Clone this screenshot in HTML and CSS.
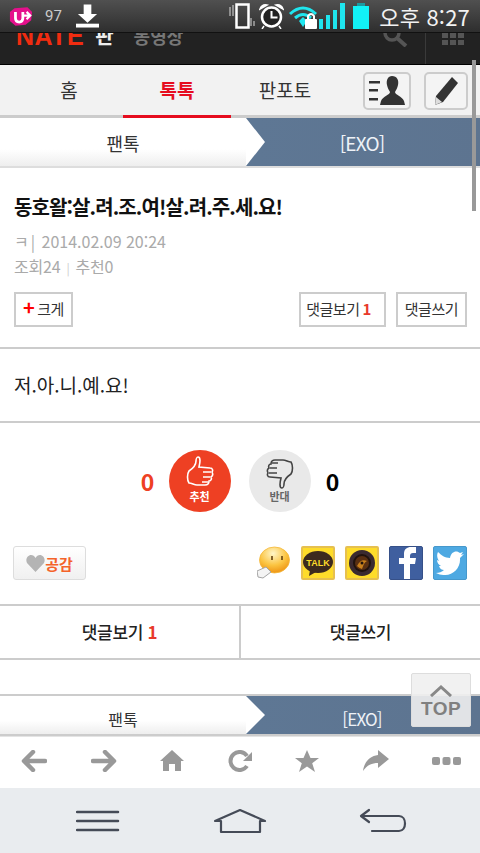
FILE: index.html
```html
<!DOCTYPE html>
<html lang="ko">
<head>
  <meta charset="UTF-8" />
  <title>톡톡 - 동호왈</title>
  <link rel="stylesheet" href="styles.css">
</head>
<body>
  <div class="phone">
    <!-- 상태바 -->
    <div class="status">
      <div class="status-left">
        <svg class="uplus" width="24" height="21" viewBox="0 0 26 22"><path d="M6 2 L20 1 L25 6 L24 15 L18 20 L7 21 L1 16 L1 6Z" fill="#e5108c"/><path d="M7 6v7q0 4 4 4t4-4V6" fill="none" stroke="#fff" stroke-width="3"/><path d="M15 10h7M19 6l4 4-4 4" fill="none" stroke="#fff" stroke-width="2.4"/></svg>
        <span class="battery-num">97</span>
        <svg class="dl" width="23" height="25" viewBox="0 0 24 25"><path d="M8 0h8v10h6L12 19 2 10h6z" fill="#fff"/><rect y="20" width="24" height="4" fill="#fff"/></svg>
      </div>
      <div class="status-right">
        <svg width="26" height="28" viewBox="0 0 26 28"><path d="M1 5v9M4 3v11" stroke="#ddd" stroke-width="1"/><rect x="7.5" y="2.500" width="12" height="23" fill="none" stroke="#fff" stroke-width="2.500"/><path d="M22 16v8M25 19v5" stroke="#ddd" stroke-width="1"/></svg>
        <svg width="25" height="26" viewBox="0 0 25 26"><circle cx="12.500" cy="14" r="9.500" fill="#222" stroke="#fff" stroke-width="2.500"/><path d="M12.500 8v6.500h6" fill="none" stroke="#fff" stroke-width="2"/><path d="M1 6q2-5 7-4zM24 6q-2-5-7-4zM5 23l-2 3M20 23l2 3" fill="#fff" stroke="#fff" stroke-width="1.500"/></svg>
        <svg width="30" height="26" viewBox="0 0 30 26"><path d="M2 11q13-12 26 0M7 15q8-7 16 0" fill="none" stroke="#1fe5ee" stroke-width="3"/><path d="M11 18l4-4 4 4-4 6z" fill="#1fe5ee"/><rect x="17" y="16" width="12" height="10" rx="1" fill="#fff"/><path d="M20 16v-3q3-4 6 0v3" fill="none" stroke="#fff" stroke-width="2"/></svg>
        <svg class="signal" width="26" height="26" viewBox="0 0 26 26"><path d="M0 16h4v10H0zM7 12h4v14H7zM14 7h4v19h-4zM21 0h5v26h-5z" fill="#1fe5ee"/></svg>
        <svg class="batt" width="16" height="26" viewBox="0 0 16 26"><rect x="4" width="8" height="3" fill="#1a9aa0"/><rect y="3" width="16" height="23" fill="#12f1f6"/></svg>
        <span class="clock">오후 8:27</span>
      </div>
    </div>

    <div class="content">
      <!-- 네이트 판 헤더 -->
      <div class="nate">
        <div class="nate-left">
          <span class="nate-logo">NATE</span>
          <span class="nate-pann">판</span>
          <span class="nate-video">동영상</span>
        </div>
        <div class="nate-right">
          <svg width="26" height="14" viewBox="0 0 26 14"><circle cx="9" cy="0" r="7" fill="none" stroke="#555" stroke-width="3.500"/><path d="M14 5l9 8" stroke="#555" stroke-width="4"/></svg>
          <i class="nate-split"></i>
          <svg width="22" height="12" viewBox="0 0 22 12"><path d="M0 0h6v5H0zM8 0h6v5H8zM16 0h6v5h-6zM0 7h6v5H0zM8 7h6v5H8zM16 7h6v5h-6z" fill="#555"/></svg>
        </div>
      </div>

      <!-- 탭 -->
      <div class="tabs">
        <a class="tab">홈</a>
        <a class="tab on">톡톡</a>
        <a class="tab">판포토</a>
        <div class="tab-btns">
          <span class="icon-btn wide">
            <svg width="36" height="32" viewBox="0 0 36 32"><path d="M0 6h11v2.500H0zM0 14h9v2.500H0zM0 23h9v2.500H0z" fill="#333"/><path d="M23 1c5 0 7 4 6 9-.5 3-2 5-3 7 0 3 7 4 9 9l1 4H11l1-4c2-5 9-6 9-9-1-2-2.500-4-3-7-1-5 1-9 5-9z" fill="#333"/></svg>
          </span>
          <span class="icon-btn">
            <svg width="26" height="32" viewBox="0 0 26 32"><path d="M19 2l6 6-15 19-8 3 1-9z" fill="#333"/><path d="M3 22l6 5-7 3z" fill="#ddd"/></svg>
          </span>
        </div>
      </div>

      <div class="crumb">
        <div class="crumb-left">팬톡</div>
        <svg class="crumb-arrow" width="20" height="48" viewBox="0 0 20 48" preserveAspectRatio="none"><path d="M0 0L19 24 0 48z" fill="#fff"/></svg>
        <div class="crumb-right">[EXO]</div>
      </div>

      <!-- 글 정보 -->
      <div class="post-head">
        <h1 class="post-title">동호왈:살.려.조.여!살.려.주.세.요!</h1>
        <div class="meta meta-date">ㅋ<span class="bar">|</span> 2014.02.09 20:24</div>
        <div class="meta meta-count">조회24<span class="bar">|</span>추천0</div>
        <div class="post-btns">
          <a class="btn-sm"><b class="plus">+</b>크게</a>
          <div class="post-btns-right">
            <a class="btn-sm">댓글보기<em>1</em></a>
            <a class="btn-sm">댓글쓰기</a>
          </div>
        </div>
      </div>

      <div class="post-body">저.아.니.예.요!</div>

      <!-- 추천 / 반대 -->
      <div class="vote">
        <span class="vote-num up">0</span>
        <div class="vote-circle good">
          <svg width="28" height="33" viewBox="0 0 28 33"><path d="M12 1c3 0 2 6 1 10l11 1c3 0 3 3 2 4 1 2 1 4-1 5 1 2 0 4-2 4 0 3-2 4-4 4H11c-3 0-5-2-8-2-2-3-2-9 0-12 3-2 7-6 7-10 0-2 1-4 2-4z" fill="none" stroke="#fff" stroke-width="1.600"/><path d="M17 16h8M17 21h7M16 26h6" stroke="#fff" stroke-width="1.400"/></svg>
          <span>추천</span>
        </div>
        <div class="vote-circle bad">
          <svg width="28" height="33" viewBox="0 0 28 33"><path d="M16 32c-3 0-2-6-1-10L4 21c-3 0-3-3-2-4-1-2-1-4 1-5-1-2 0-4 2-4 0-3 2-4 4-4h8c3 0 5 2 8 2 2 3 2 9 0 12-3 2-7 6-7 10 0 2-1 4-2 4z" fill="none" stroke="#444" stroke-width="1.600"/><path d="M11 17H3M11 12H4M12 7H6" stroke="#444" stroke-width="1.400"/></svg>
          <span>반대</span>
        </div>
        <span class="vote-num">0</span>
      </div>

      <!-- 공감 / 공유 -->
      <div class="share-row">
        <a class="like">
          <svg width="19" height="17" viewBox="0 0 19 17"><path d="M9.500 17L1 8C-1 4 2 0 5 0c2 0 3.500 1 4.500 3C10.500 1 12 0 14 0c3 0 6 4 4 8z" fill="#b4b4b4"/></svg>공감
        </a>
        <div class="share-icons">
          <svg width="33" height="33" viewBox="0 0 33 33"><defs><radialGradient id="smile" cx="45%" cy="25%" r="75%"><stop offset="0" stop-color="#fff6c8"/><stop offset=".6" stop-color="#fbc441"/><stop offset="1" stop-color="#ee9414"/></radialGradient></defs><ellipse cx="17.500" cy="14" rx="15" ry="13" fill="url(#smile)" stroke="#f5b93a" stroke-width=".8"/><path d="M15 10v4M25 10v4" stroke="#664411" stroke-width="1.600"/><path d="M0 25l9-4 5 5-8 6-5-1z" fill="#f4f4f4" stroke="#a5a5a5"/></svg>
          <span class="sns kakao">
            <svg width="30" height="26" viewBox="0 0 30 26"><ellipse cx="15" cy="12" rx="15" ry="11" fill="#3c2a1e"/><path d="M7 20l-1 6 7-4z" fill="#3c2a1e"/><text x="15" y="15.500" text-anchor="middle" class="talk">TALK</text></svg>
          </span>
          <span class="sns camera">
            <svg width="26" height="26" viewBox="0 0 26 26"><circle cx="13" cy="13" r="13" fill="#3a2a30"/><circle cx="13" cy="13" r="9" fill="#21130d"/><circle cx="13" cy="13" r="7" fill="#5a3012"/><path d="M8 16q4-8 10-5-2 1-3 3t-2 5q-3-1-5-3z" fill="#c8801c"/><circle cx="13" cy="13" r="1.500" fill="#21130d"/></svg>
          </span>
          <span class="sns fb">
            <svg width="20" height="32" viewBox="0 0 20 32"><path d="M6 32V17H1v-6h5V7c0-5 3-7 7-7h5v6h-3c-2 0-3 1-3 3v2h6l-1 6h-5v15z" fill="#fff"/></svg>
          </span>
          <span class="sns tw">
            <svg width="28" height="24" viewBox="0 0 28 24"><path d="M28 3l-3 1 2-3-3 1C21-1 15 0 14 7 9 7 5 4 2 1 0 5 2 8 3 10L1 9c0 3 2 5 4 6H3c1 3 3 4 5 4-2 2-5 3-8 3 12 6 25-2 24-15z" fill="#fff"/></svg>
          </span>
        </div>
      </div>

      <div class="reply-row">
        <a class="reply-cell">댓글보기 <em>1</em></a>
        <a class="reply-cell">댓글쓰기</a>
      </div>

      <div class="crumb crumb-low">
        <div class="crumb-left">팬톡</div>
        <svg class="crumb-arrow" width="20" height="40" viewBox="0 0 20 40" preserveAspectRatio="none"><path d="M0 0L19 20 0 40z" fill="#fff"/></svg>
        <div class="crumb-right">[EXO]</div>
      </div>

      <div class="scrollbar"></div>
      <a class="top-btn">
        <svg width="24" height="12" viewBox="0 0 24 12"><path d="M2 11L12 2l10 9" fill="none" stroke="#888" stroke-width="3"/></svg>
        <span>TOP</span>
      </a>
    </div>

    <!-- 브라우저 툴바 -->
    <div class="toolbar">
      <svg width="26" height="22" viewBox="0 0 26 22"><path d="M24 11H4M12 2l-9 9 9 9" fill="none" stroke="#999" stroke-width="4.500" stroke-linejoin="round" stroke-linecap="round"/></svg>
      <svg width="26" height="22" viewBox="0 0 26 22"><path d="M2 11h20M14 2l9 9-9 9" fill="none" stroke="#999" stroke-width="4.500" stroke-linejoin="round" stroke-linecap="round"/></svg>
      <svg width="24" height="22" viewBox="0 0 24 22"><path d="M12 0L0 11h3v10h6v-7h6v7h6V11h3z" fill="#999"/></svg>
      <svg width="24" height="22" viewBox="0 0 24 22"><path d="M19 16a9 9 0 1 1 0-10" fill="none" stroke="#999" stroke-width="4"/><path d="M24 2v9h-9z" fill="#999"/></svg>
      <svg width="24" height="22" viewBox="0 0 24 22"><path d="M12 0l3.500 8H24l-6.800 5.200L20 22l-8-5.500L4 22l2.800-8.800L0 8h8.500z" fill="#999"/></svg>
      <svg width="26" height="22" viewBox="0 0 26 22"><path d="M15 0l11 9-11 9v-5C9 13 4 15 0 21 1 13 6 6 15 5z" fill="#999"/></svg>
      <svg width="29" height="8" viewBox="0 0 29 8"><rect width="8" height="8" rx="2" fill="#999"/><rect x="10.500" width="8" height="8" rx="2" fill="#999"/><rect x="21" width="8" height="8" rx="2" fill="#999"/></svg>
    </div>

    <!-- 안드로이드 내비게이션 -->
    <div class="navbar">
      <svg width="44" height="22" viewBox="0 0 44 22"><path d="M1 2h41M1 11h41M1 20h41" stroke="#454b57" stroke-width="2.500" stroke-linecap="round"/></svg>
      <svg width="54" height="26" viewBox="0 0 54 26"><path d="M2 13L27 2l25 11h-5v11H8V13z" fill="none" stroke="#454b57" stroke-width="2.200" stroke-linejoin="round"/></svg>
      <svg width="48" height="26" viewBox="0 0 48 26"><path d="M10 2L2 8l8 6M2 8h38c8 0 8 15 0 15H13" fill="none" stroke="#454b57" stroke-width="2.200" stroke-linecap="round" stroke-linejoin="round"/></svg>
    </div>
  </div>
</body>
</html>
```

FILE: styles.css
```css
* {
  box-sizing: border-box;
}
html, body {
  margin: 0;
  padding: 0;
}
body {
  font-family: "Noto Sans CJK KR", "Noto Sans", sans-serif;
  background: #fff;
  color: #222;
}
a {
  color: inherit;
  text-decoration: none;
}
em {
  font-style: normal;
  color: #e8392a;
}
.phone {
  width: 480px;
  height: 853px;
  display: flex;
  flex-direction: column;
  overflow: hidden;
}

/* status bar */
.status {
  height: 33px;
  flex: none;
  display: flex;
  justify-content: space-between;
  align-items: center;
  padding: 0 10px 0 9px;
  background: linear-gradient(#505050, #2e2e2e);
  border-bottom: 1px solid #111;
}
.status-left, .status-right {
  display: flex;
  align-items: center;
}
.battery-num {
  font: 15px Roboto, sans-serif;
  color: #ccc;
  margin: 0 14px 0 12px;
}
.status-right {
  gap: 4px;
}
.signal {
  margin-left: -3px;
}
.batt {
  margin: 0 6px 0 4px;
}
.clock {
  font-size: 22px;
  line-height: 26px;
  color: #f2f2f2;
  letter-spacing: .2px;
  white-space: nowrap;
}
.status svg {
  flex: none;
}

.content {
  flex: 1;
  min-height: 0;
  position: relative;
  overflow: hidden;
}

/* nate header */
.nate {
  height: 32px;
  background: #222;
  border-bottom: 1px solid #000;
  display: flex;
  justify-content: space-between;
  overflow: hidden;
}
.nate-left {
  display: flex;
  align-items: flex-end;
  height: 14px;
  padding-left: 16px;
  line-height: 22px;
}
.nate-logo {
  font: bold 25px/22px "Liberation Sans", sans-serif;
  color: #f02c10;
  letter-spacing: .5px;
}
.nate-pann {
  font-size: 20px;
  font-weight: bold;
  color: #eee;
  margin-left: 11px;
}
.nate-video {
  font-size: 18px;
  font-weight: bold;
  color: #777;
  margin-left: 20px;
}
.nate-right {
  display: flex;
  padding-right: 16px;
  align-items: flex-start;
}
.nate-right svg:first-child {
  margin-right: 16px;
}
.nate-split {
  width: 1px;
  height: 32px;
  background: #3a3a3a;
  margin-right: 16px;
}

/* tabs */
.tabs {
  height: 53px;
  display: flex;
  background: #f2f2f2;
  border-bottom: 3px solid #ccc;
  padding-left: 15px;
}
.tab {
  width: 108px;
  height: 53px;
  font-size: 19px;
  line-height: 50px;
  text-align: center;
  color: #333;
  flex: none;
}
.tab.on {
  color: #e60d1f;
  font-weight: bold;
  border-bottom: 3px solid #e60d1f;
}
.tab-btns {
  display: flex;
  gap: 13px;
  padding: 7px 0 0 24px;
}
.icon-btn {
  width: 44px;
  height: 38px;
  display: flex;
  align-items: center;
  justify-content: center;
  border: 2px solid #ccc;
  border-radius: 5px;
  background: #f4f4f4;
}
.icon-btn.wide {
  width: 48px;
}

/* breadcrumb */
.crumb {
  height: 50px;
  display: flex;
  background: linear-gradient(90deg, #4d6482 0, #5f7a98 30px, #5d7490 100%);
  position: relative;
  border-bottom: 2px solid #ddd;
}
.crumb-left {
  width: 246px;
  flex: none;
  background: linear-gradient(#fff 65%, #eee);
  text-align: center;
  font-size: 18px;
  line-height: 50px;
  color: #333;
}
.crumb-arrow {
  width: 20px;
  height: 100%;
  flex: none;
}
.crumb-right {
  flex: 1;
  text-align: center;
  font-size: 19px;
  line-height: 50px;
  color: #eef2f7;
  padding-right: 22px;
  letter-spacing: -.8px;
}
.crumb-low {
  height: 42px;
  margin-top: 34px;
  border-top: 2px solid #ccc;
  border-bottom: 2px solid #ccc;
}
.crumb-low .crumb-left, .crumb-low .crumb-right {
  font-size: 16px;
  line-height: 46px;
}
.crumb-low .crumb-right {
  font-size: 17px;
}

/* post */
.post-head {
  padding: 22px 13px 0 14px;
  height: 181px;
  border-bottom: 2px solid #ccc;
}
.post-title {
  margin: 0;
  font-size: 20px;
  line-height: 34px;
  font-weight: bold;
  color: #111;
  letter-spacing: -.9px;
  white-space: nowrap;
}
.meta {
  font-size: 16px;
  line-height: 22px;
  color: #aaa;
  white-space: nowrap;
}
.meta-date {
  margin-top: 6px;
}
.meta-date .bar {
  margin: 0 2px;
}
.meta-count {
  margin-top: 3px;
  letter-spacing: -.2px;
}
.meta-count .bar {
  margin: 0 6px;
  font-size: 12px;
  color: #ccc;
}
.post-btns {
  display: flex;
  justify-content: space-between;
  margin-top: 13px;
}
.post-btns-right {
  display: flex;
  gap: 10px;
}
.post-btns-right .btn-sm:first-child {
  padding-left: 5px;
}
.btn-sm {
  height: 35px;
  padding: 0 7px;
  border: 2px solid #ccc;
  font-size: 15px;
  line-height: 30px;
  letter-spacing: -.5px;
  color: #333;
  background: #fff;
  white-space: nowrap;
}
.btn-sm em {
  margin-left: 3px;
  margin-right: 6px;
  font-weight: bold;
}
.plus {
  color: #f00;
  font-size: 20px;
  line-height: 26px;
  margin-right: 3px;
}
.post-body {
  height: 74px;
  padding-left: 14px;
  font-size: 19px;
  line-height: 72px;
  color: #222;
  border-bottom: 2px solid #ccc;
}

/* vote */
.vote {
  display: flex;
  justify-content: center;
  align-items: flex-start;
  padding-top: 27px;
  height: 123px;
}
.vote-num {
  width: 14px;
  font-size: 23px;
  line-height: 62px;
  font-weight: bold;
  color: #000;
  text-align: center;
}
.vote-num.up {
  color: #ee4023;
}
.vote-circle {
  width: 62px;
  height: 62px;
  border-radius: 50%;
  display: flex;
  flex-direction: column;
  align-items: center;
  padding-top: 6px;
  font-size: 11px;
  font-weight: bold;
  line-height: 14px;
}
.vote-circle.good {
  background: #ee4023;
  color: #fff;
  margin: 0 18px 0 14px;
}
.vote-circle.bad {
  background: #e9e9e9;
  color: #666;
  margin-right: 15px;
}

/* share */
.share-row {
  display: flex;
  justify-content: space-between;
  align-items: flex-start;
  height: 58px;
  padding: 0 13px;
}
.like {
  width: 73px;
  height: 34px;
  display: flex;
  align-items: center;
  justify-content: center;
  border: 1px solid #ddd;
  border-radius: 3px;
  background: linear-gradient(#fff, #f0f0f0);
  color: #f4632a;
  font-size: 15px;
  font-weight: bold;
}
.share-icons {
  display: flex;
  gap: 10px;
}
.share-icons > svg {
  margin-right: 1px;
}
.sns {
  width: 34px;
  height: 34px;
  display: flex;
  align-items: center;
  justify-content: center;
  overflow: hidden;
  border-radius: 2px;
}
.kakao, .camera {
  background: #fedc2a;
  border: 2px solid #e6c050;
}
.fb {
  background: #3f5f9f;
  border: 1px solid #365088;
  align-items: flex-end;
  padding-left: 4px;
}
.tw {
  background: #4ea9e2;
  border: 1px solid #4698cc;
}
.talk {
  font: bold 9px "Liberation Sans", sans-serif;
  fill: #fedc2a;
}

/* reply */
.reply-row {
  display: flex;
  height: 56px;
  border-top: 2px solid #ccc;
  border-bottom: 2px solid #ccc;
}
.reply-cell {
  flex: 1;
  text-align: center;
  font-size: 17px;
  font-weight: 500;
  line-height: 52px;
  letter-spacing: -.3px;
  color: #222;
}
.reply-cell:first-child {
  flex: none;
  width: 239px;
}
.reply-cell + .reply-cell {
  border-left: 2px solid #ccc;
}
.reply-cell em {
  font-weight: bold;
}

.scrollbar {
  position: absolute;
  top: 27px;
  right: 4px;
  width: 4px;
  height: 151px;
  background: #999;
}
.top-btn {
  position: absolute;
  top: 640px;
  right: 9px;
  width: 60px;
  height: 54px;
  display: flex;
  flex-direction: column;
  align-items: center;
  padding-top: 11px;
  border: 1px solid #ddd;
  border-radius: 2px;
  background: rgba(240,240,240,.9);
  color: #808080;
}
.top-btn span {
  font: bold 19px/20px "Liberation Sans", sans-serif;
  letter-spacing: .5px;
  margin-top: 2px;
}

/* toolbar */
.toolbar {
  height: 52px;
  flex: none;
  display: flex;
  justify-content: space-between;
  align-items: center;
  padding: 0 19px 4px 21px;
  background: #fff;
  border-top: 1px solid #e4e4e4;
}
.navbar {
  height: 65px;
  flex: none;
  background: #e9ecef;
  display: flex;
  align-items: center;
  justify-content: space-between;
  padding: 0 73px 0 76px;
}
```
